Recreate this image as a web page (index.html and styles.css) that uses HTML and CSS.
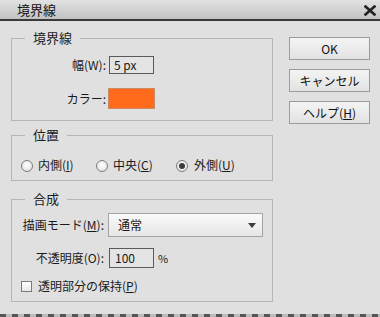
FILE: index.html
```html
<!DOCTYPE html>
<html lang="ja">
<head>
<meta charset="utf-8">
<link rel="stylesheet" href="styles.css">
</head>
<body>
<div class="titlebar">
  <span class="title">境界線</span>
  <svg class="close" width="12" height="11" viewBox="0 0 12 11"><path d="M1.5 1.5 L10.5 9.5 M10.5 1.5 L1.5 9.5" stroke="#222" stroke-width="2.6" stroke-linecap="square"/></svg>
</div>
<div class="main">
  <div class="left">
    <fieldset class="group g1">
      <legend>境界線</legend>
      <div class="form f1">
        <label class="lbl">幅(W):</label>
        <div class="field">5 px</div>
        <label class="lbl">カラー:</label>
        <div class="swatch"></div>
      </div>
    </fieldset>
    <fieldset class="group g2">
      <legend>位置</legend>
      <div class="radios">
        <div class="opt"><span class="radio"></span><span>内側(<u>I</u>)</span></div>
        <div class="opt"><span class="radio"></span><span>中央(<u>C</u>)</span></div>
        <div class="opt"><span class="radio checked"></span><span>外側(<u>U</u>)</span></div>
      </div>
    </fieldset>
    <fieldset class="group g3">
      <legend>合成</legend>
      <div class="form f3">
        <label class="lbl">描画モード(<u>M</u>):</label>
        <div class="select"><span>通常</span><span class="arrow"></span></div>
        <label class="lbl">不透明度(O):</label>
        <div class="pct"><div class="field small">100</div><span class="unit">%</span></div>
        <div class="check"><span class="box"></span><span>透明部分の保持(<u>P</u>)</span></div>
      </div>
    </fieldset>
  </div>
  <div class="right">
    <div class="btn">OK</div>
    <div class="btn">キャンセル</div>
    <div class="btn">ヘルプ(<u>H</u>)</div>
  </div>
</div>
<div class="strip"></div>
</body>
</html>
```
FILE: styles.css
```css
* { box-sizing: border-box; }
html, body { margin: 0; padding: 0; }
body {
  width: 380px;
  height: 317px;
  background: #e0e0e0;
  font-family: "Noto Sans CJK JP", "Noto Sans", sans-serif;
  font-size: 12px;
  line-height: 14px;
  color: #1a1a1a;
  display: flex;
  flex-direction: column;
  overflow: hidden;
}
u { text-decoration: underline; text-underline-offset: 1px; }
.titlebar {
  height: 21px;
  background: linear-gradient(#e2e2e2, #c2c2c2);
  border-bottom: 2px solid #3a3a3a;
  display: flex;
  align-items: center;
  justify-content: space-between;
  padding: 0 4px 0 17px;
}
.title { font-size: 13px; line-height: 14px; margin-top: 1px; color: #111; }
.close { display: block; margin-top: 1px; }
.main {
  display: flex;
  padding-left: 11px;
}
.left { width: 262px; padding-top: 10px; }
.right {
  margin-left: 16px;
  width: 81px;
  padding-top: 16px;
  display: flex;
  flex-direction: column;
  gap: 9px;
}
.btn {
  height: 23px;
  border: 1px solid #9c9c9c;
  background: linear-gradient(#f4f4f4, #e2e2e2);
  display: flex;
  align-items: center;
  justify-content: center;
  font-size: 12px;
  color: #111;
}
.group {
  margin: 0;
  padding: 0;
  border: 1px solid #b6b6b6;
  min-width: 0;
}
.group legend {
  padding: 0 8px;
  margin-left: 13px;
  font-size: 13px;
  line-height: 14px;
  height: 14px;
}
.g2 { margin-top: 7px; }
.g3 { margin-top: 11px; }
.form {
  display: grid;
  align-items: center;
}
.f1 {
  grid-template-columns: 94px auto;
  column-gap: 3px;
  row-gap: 14px;
  padding: 11px 0 11px;
  justify-items: start;
}
.lbl { justify-self: end; white-space: nowrap; }
.field {
  height: 18px;
  width: 45px;
  border: 1px solid #5a5a5a;
  background: #e4e4e4;
  padding-left: 4px;
  display: flex;
  align-items: center;
}
.swatch {
  width: 47px;
  height: 21px;
  margin-left: -1px;
  background: #ff6a1c;
  border: 1px solid #c98a64;
}
.radios {
  display: grid;
  grid-template-columns: 75px 80px auto;
  padding: 16px 0 8px 9px;
}
.opt { display: flex; align-items: center; gap: 5px; white-space: nowrap; }
.radio {
  width: 12px;
  height: 12px;
  border-radius: 50%;
  border: 1px solid #7c7c7c;
  background: radial-gradient(circle at 50% 40%, #ffffff, #dcdcdc);
  display: flex;
  align-items: center;
  justify-content: center;
  margin-top: 1px;
}
.radio.checked::after {
  content: "";
  width: 6px;
  height: 6px;
  border-radius: 50%;
  background: #3c3c3c;
}
.opt:nth-child(3) .radio { margin-right: 1px; }
.f3 {
  grid-template-columns: 92px auto;
  column-gap: 4px;
  row-gap: 11px;
  padding: 7px 0 8px;
}
.select {
  width: 155px;
  height: 24px;
  border: 1px solid #a4a4a4;
  background: linear-gradient(#fafafa, #e6e6e6);
  display: flex;
  align-items: center;
  justify-content: space-between;
  padding: 0 6px 0 9px;
}
.arrow {
  width: 0;
  height: 0;
  border-left: 4px solid transparent;
  border-right: 4px solid transparent;
  border-top: 5px solid #3c3c3c;
  margin-top: 1px;
}
.pct { display: flex; align-items: center; }
.field.small { height: 20px; width: 45px; margin-left: 1px; padding-left: 5px; }
.unit { margin-left: 4px; font-size: 11px; }
.check {
  grid-column: 1 / span 2;
  display: flex;
  align-items: center;
  gap: 6px;
  padding-left: 9px;
}
.box {
  width: 11px;
  height: 11px;
  border: 1px solid #7a7a7a;
  background: linear-gradient(#ffffff, #e8e8e8);
}
.strip {
  margin-top: auto;
  height: 3px;
  background: repeating-linear-gradient(90deg, #555 0 6px, #bcbcbc 6px 12px);
}
```
